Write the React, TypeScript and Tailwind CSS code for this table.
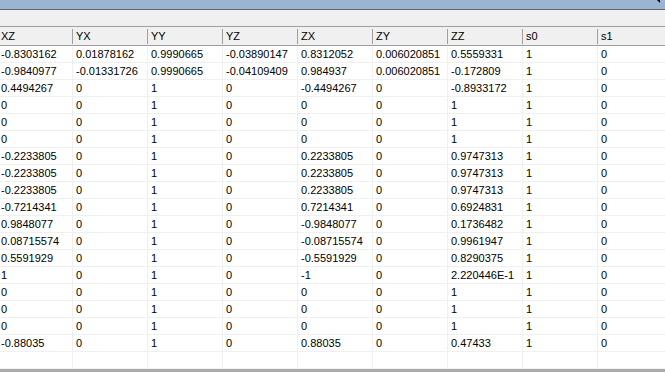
import React from 'react';

const columns = ['XZ', 'YX', 'YY', 'YZ', 'ZX', 'ZY', 'ZZ', 's0', 's1'];

const zeros = ['0', '0', '1', '0', '0', '0', '1', '1', '0'];

const rows: string[][] = [
  ['-0.8303162', '0.01878162', '0.9990665', '-0.03890147', '0.8312052', '0.006020851', '0.5559331', '1', '0'],
  ['-0.9840977', '-0.01331726', '0.9990665', '-0.04109409', '0.984937', '0.006020851', '-0.172809', '1', '0'],
  ['0.4494267', '0', '1', '0', '-0.4494267', '0', '-0.8933172', '1', '0'],
  zeros,
  zeros,
  zeros,
  ['-0.2233805', '0', '1', '0', '0.2233805', '0', '0.9747313', '1', '0'],
  ['-0.2233805', '0', '1', '0', '0.2233805', '0', '0.9747313', '1', '0'],
  ['-0.2233805', '0', '1', '0', '0.2233805', '0', '0.9747313', '1', '0'],
  ['-0.7214341', '0', '1', '0', '0.7214341', '0', '0.6924831', '1', '0'],
  ['0.9848077', '0', '1', '0', '-0.9848077', '0', '0.1736482', '1', '0'],
  ['0.08715574', '0', '1', '0', '-0.08715574', '0', '0.9961947', '1', '0'],
  ['0.5591929', '0', '1', '0', '-0.5591929', '0', '0.8290375', '1', '0'],
  ['1', '0', '1', '0', '-1', '0', '2.220446E-1', '1', '0'],
  zeros,
  zeros,
  zeros,
  ['-0.88035', '0', '1', '0', '0.88035', '0', '0.47433', '1', '0'],
  ['', '', '', '', '', '', '', '', ''],
];

// first column is scrolled partly out of view
const colClass = (i: number) =>
  i === 0 ? 'w-[73px] pl-px' : 'w-[75px] pl-[3px]';

const App: React.FC = () => {
  return (
    <div className="w-[665px] h-[372px] overflow-hidden flex flex-col bg-white font-['Liberation_Sans',Arial,sans-serif] text-[11px] text-black">
      {/* window title strip */}
      <div className="h-[9px] bg-[#9bb4d1] flex justify-end pr-[5px] shrink-0">
        <div className="w-0 h-0 border-l-[3px] border-l-transparent border-t-[3px] border-t-black" />
      </div>
      <div className="h-px bg-[#646464] shrink-0" />
      <div className="h-[16px] bg-[#f0f0f0] shrink-0" />
      <div className="h-px bg-[#a0a0a0] shrink-0" />

      {/* column headers */}
      <div className="flex h-[19px] bg-[#f0f0f0] border-b border-[#a0a0a0] shrink-0">
        {columns.map((c, i) => (
          <div key={c} className={`${colClass(i)} shrink-0 flex items-center relative leading-none`}>
            {c}
            <div className="absolute right-0 top-[2px] bottom-[1px] w-px bg-[#a0a0a0]" />
          </div>
        ))}
      </div>

      {/* rows */}
      <div className="flex-1 flex flex-col">
        {rows.map((r, ri) => (
          <div key={ri} className="flex h-[17px] shrink-0 border-b border-[#f0f0f0]">
            {r.map((v, ci) => (
              <div
                key={ci}
                className={`${colClass(ci)} shrink-0 flex items-center border-r border-[#f0f0f0] leading-none whitespace-nowrap`}
              >
                {v}
              </div>
            ))}
          </div>
        ))}
      </div>

      <div className="h-[3px] bg-[#ababab] shrink-0" />
    </div>
  );
};

export default App;
